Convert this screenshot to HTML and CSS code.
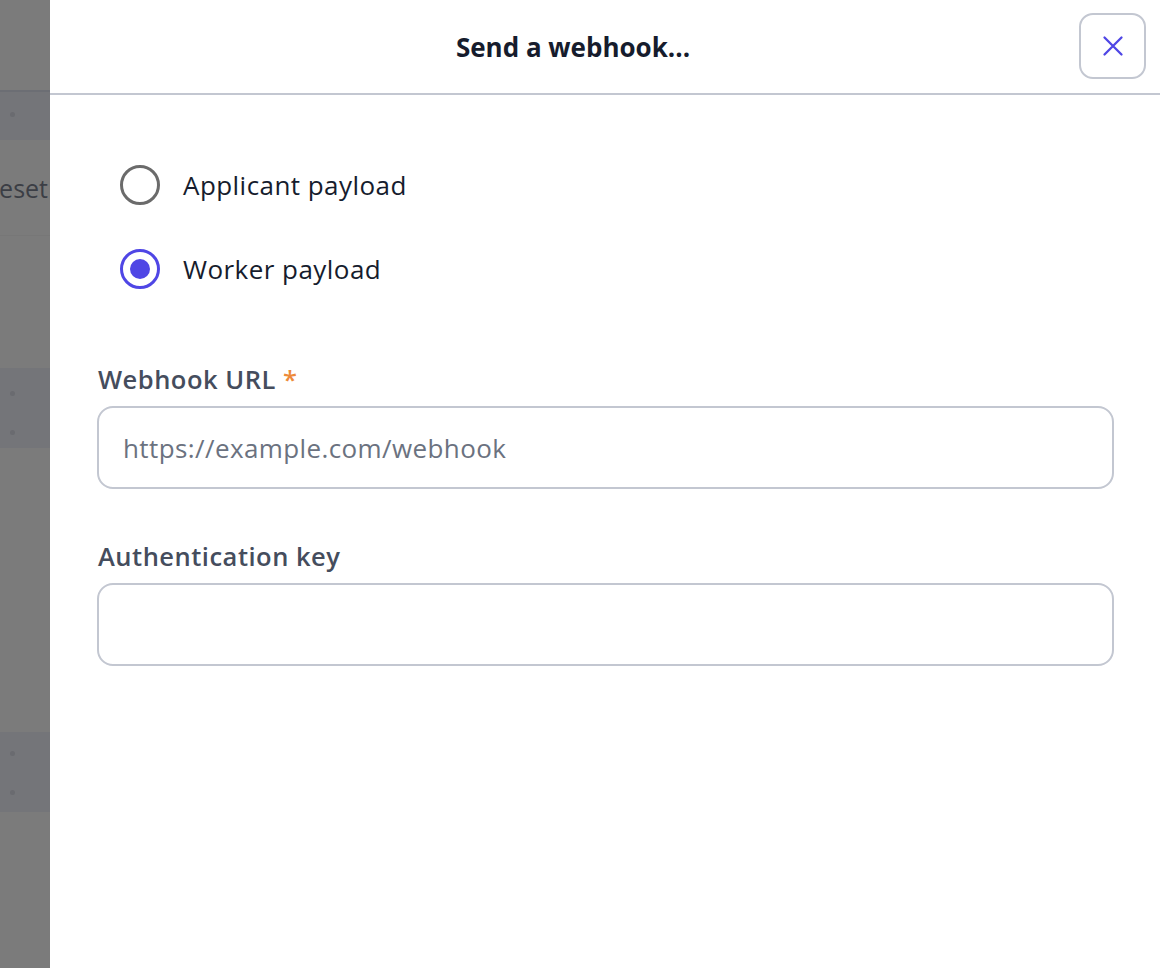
FILE: index.html
```html
<!DOCTYPE html>
<html lang="en">
<head>
<meta charset="utf-8">
<title>Send a webhook</title>
<link rel="stylesheet" href="styles.css">
</head>
<body>
<div class="page">
  <div class="backdrop">
    <div class="bd-top"></div>
    <div class="bd-band bd-band-1"><span class="dot"></span></div>
    <div class="bd-row"><span class="bd-text">eset</span></div>
    <div class="bd-gap"></div>
    <div class="bd-band bd-band-2"><span class="dot"></span><span class="dot"></span></div>
    <div class="bd-gap2"></div>
    <div class="bd-band bd-band-3"><span class="dot"></span><span class="dot"></span></div>
  </div>
  <div class="panel">
    <header class="panel-header">
      <h1 class="panel-title">Send a webhook...</h1>
      <button class="close-btn" aria-label="Close">
        <svg width="24" height="24" viewBox="0 0 24 24" fill="none" stroke="currentColor" stroke-width="2.3" stroke-linecap="round"><path d="M3.5 3.5L20.5 20.5M20.5 3.5L3.5 20.5"/></svg>
      </button>
    </header>
    <div class="panel-body">
      <div class="radio-group">
        <label class="radio-row">
          <span class="radio"></span>
          <span class="radio-label">Applicant payload</span>
        </label>
        <label class="radio-row">
          <span class="radio radio-checked"><span class="radio-dot"></span></span>
          <span class="radio-label">Worker payload</span>
        </label>
      </div>
      <div class="field">
        <div class="field-label">Webhook URL <span class="req">*</span></div>
        <div class="input"><span class="placeholder">https://example.com/webhook</span></div>
      </div>
      <div class="field">
        <div class="field-label">Authentication key</div>
        <div class="input"></div>
      </div>
    </div>
  </div>
</div>
</body>
</html>
```

FILE: styles.css
```css
* { box-sizing: border-box; }
html, body { margin: 0; padding: 0; }
body {
  font-family: "Open Sans", "Noto Sans", sans-serif;
  background: #ffffff;
}
.page {
  display: flex;
  width: 1160px;
  height: 968px;
  overflow: hidden;
}
.backdrop {
  width: 50px;
  flex: none;
  background: #7b7b7b;
  display: flex;
  flex-direction: column;
  overflow: hidden;
}
.bd-top { height: 92px; border-bottom: 2px solid #6c6e74; }
.bd-band {
  background: #747579;
  display: flex;
  flex-direction: column;
  gap: 34px;
  padding-left: 10px;
}
.bd-band-1 { height: 48px; padding-top: 20px; }
.bd-band-2 { height: 80px; padding-top: 23px; }
.bd-band-3 { height: 80px; padding-top: 19px; }
.dot { width: 5px; height: 5px; border-radius: 50%; background: #6a6b70; display: block; }
.bd-row {
  height: 96px;
  display: flex;
  align-items: center;
  justify-content: flex-end;
  border-bottom: 1px solid #777;
}
.bd-text {
  font-size: 25px;
  color: #3b3e45;
  margin-right: 2px;
  white-space: nowrap;
}
.bd-gap { height: 132px; }
.bd-gap2 { height: 284px; }

.panel {
  flex: 1;
  background: #ffffff;
  display: flex;
  flex-direction: column;
}
.panel-header {
  height: 95px;
  border-bottom: 2px solid #c3c7d1;
  display: flex;
  align-items: center;
  padding: 0 14px 0 0;
}
.panel-title {
  flex: 1;
  margin: 0;
  text-align: center;
  font-size: 26px;
  line-height: 34px;
  font-weight: 700;
  color: #161c2d;
  padding-left: 17px;
}
.close-btn {
  width: 67px;
  height: 66px;
  border: 2px solid #c3c7d1;
  border-radius: 14px;
  background: #fff;
  color: #4f46e5;
  display: flex;
  align-items: center;
  justify-content: center;
  padding: 0;
  margin-top: -2px;
}
.panel-body {
  padding: 70px 46px 0 47px;
}
.radio-group {
  display: flex;
  flex-direction: column;
  gap: 44px;
  padding-left: 23px;
  margin-bottom: 74px;
}
.radio-row {
  display: flex;
  align-items: center;
  gap: 23px;
  height: 40px;
}
.radio {
  width: 40px;
  height: 40px;
  border-radius: 50%;
  border: 3px solid #6b6b6b;
  display: flex;
  align-items: center;
  justify-content: center;
  flex: none;
}
.radio-checked { border-color: #4f46e5; }
.radio-dot { width: 20px; height: 20px; border-radius: 50%; background: #4f46e5; }
.radio-label {
  font-size: 26px;
  letter-spacing: 0.45px;
  color: #161c2d;
}
.field { margin-bottom: 51px; }
.field-label {
  font-size: 25.5px;
  line-height: 33px;
  letter-spacing: 0.5px;
  font-weight: 600;
  color: #454d5d;
  margin-bottom: 10px;
  padding-left: 1px;
}
.req { color: #ed8a3a; }
.input {
  height: 83px;
  border: 2px solid #c3c7d1;
  border-radius: 16px;
  display: flex;
  align-items: center;
  padding-left: 24px;
}
.placeholder {
  font-size: 26px;
  letter-spacing: 0.4px;
  color: #6b7280;
}
```
